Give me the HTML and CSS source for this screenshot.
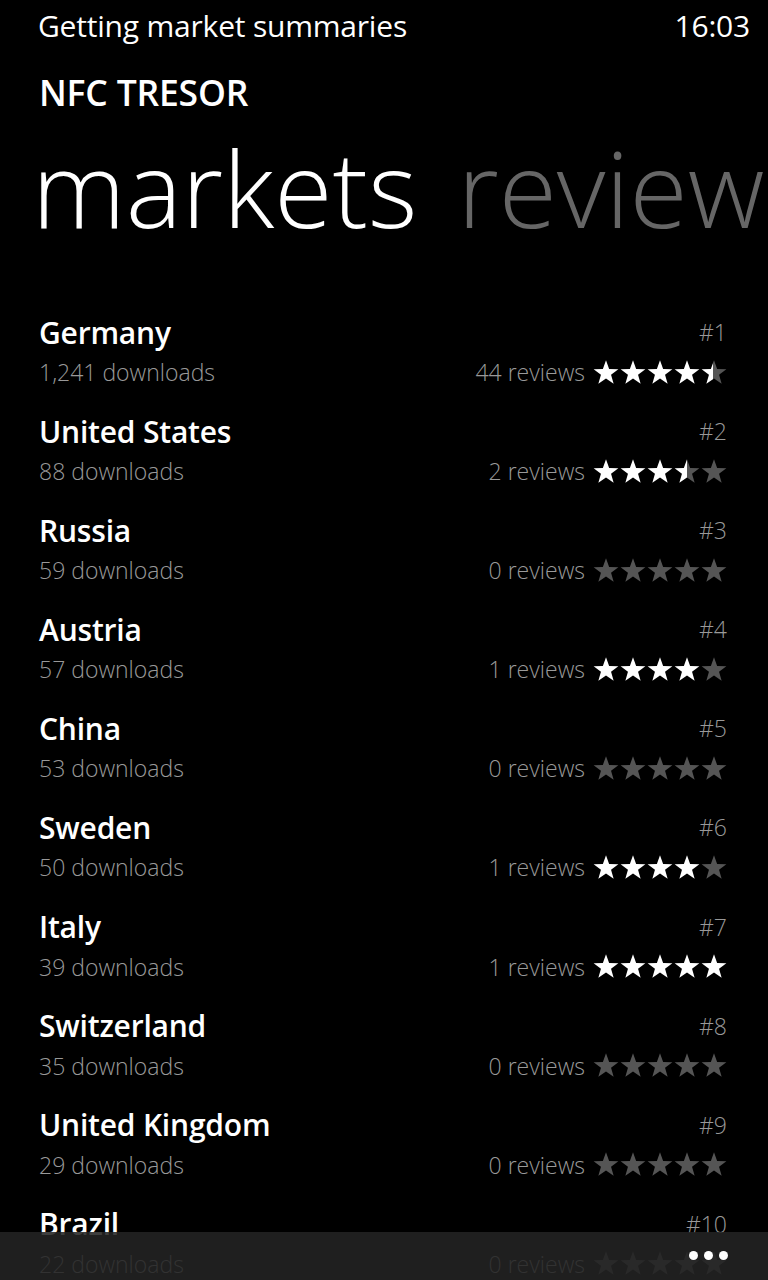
FILE: index.html
```html
<!DOCTYPE html>
<html>
<head>
<meta charset="utf-8">
<link rel="stylesheet" href="styles.css">
</head>
<body>
<svg class="defs" width="0" height="0" aria-hidden="true">
  <defs>
    <path id="star" d="M13 0.2 L16.12 8.91 L25.36 9.18 L18.04 14.84 L20.64 23.72 L13 18.5 L5.36 23.72 L7.96 14.84 L0.64 9.18 L9.88 8.91 Z"/>
    <linearGradient id="f45" x1="0" x2="1" y1="0" y2="0">
      <stop offset="0.45" stop-color="#fff"/><stop offset="0.45" stop-color="#555"/>
    </linearGradient>
    <linearGradient id="f50" x1="0" x2="1" y1="0" y2="0">
      <stop offset="0.5" stop-color="#fff"/><stop offset="0.5" stop-color="#555"/>
    </linearGradient>
  </defs>
</svg>
<div class="phone">
  <div class="status">
    <span class="status-text">Getting market summaries</span>
    <span class="clock">16:03</span>
  </div>
  <div class="app-title">NFC TRESOR</div>
  <div class="pivot">
    <span class="pivot-item active">markets</span>
    <span class="pivot-item">reviews</span>
  </div>
  <ul class="markets">
    <li class="market">
      <div class="line"><span class="name">Germany</span><span class="rank">#1</span></div>
      <div class="line"><span class="dl">1,241 downloads</span><span class="rev">44 reviews
        <span class="stars"><svg viewBox="0 0 26 25"><use href="#star" class="on"/></svg><svg viewBox="0 0 26 25"><use href="#star" class="on"/></svg><svg viewBox="0 0 26 25"><use href="#star" class="on"/></svg><svg viewBox="0 0 26 25"><use href="#star" class="on"/></svg><svg viewBox="0 0 26 25"><use href="#star" fill="url(#f45)"/></svg></span></span></div>
    </li>
    <li class="market">
      <div class="line"><span class="name">United States</span><span class="rank">#2</span></div>
      <div class="line"><span class="dl">88 downloads</span><span class="rev">2 reviews
        <span class="stars"><svg viewBox="0 0 26 25"><use href="#star" class="on"/></svg><svg viewBox="0 0 26 25"><use href="#star" class="on"/></svg><svg viewBox="0 0 26 25"><use href="#star" class="on"/></svg><svg viewBox="0 0 26 25"><use href="#star" fill="url(#f50)"/></svg><svg viewBox="0 0 26 25"><use href="#star" class="off"/></svg></span></span></div>
    </li>
    <li class="market">
      <div class="line"><span class="name">Russia</span><span class="rank">#3</span></div>
      <div class="line"><span class="dl">59 downloads</span><span class="rev">0 reviews
        <span class="stars"><svg viewBox="0 0 26 25"><use href="#star" class="off"/></svg><svg viewBox="0 0 26 25"><use href="#star" class="off"/></svg><svg viewBox="0 0 26 25"><use href="#star" class="off"/></svg><svg viewBox="0 0 26 25"><use href="#star" class="off"/></svg><svg viewBox="0 0 26 25"><use href="#star" class="off"/></svg></span></span></div>
    </li>
    <li class="market">
      <div class="line"><span class="name">Austria</span><span class="rank">#4</span></div>
      <div class="line"><span class="dl">57 downloads</span><span class="rev">1 reviews
        <span class="stars"><svg viewBox="0 0 26 25"><use href="#star" class="on"/></svg><svg viewBox="0 0 26 25"><use href="#star" class="on"/></svg><svg viewBox="0 0 26 25"><use href="#star" class="on"/></svg><svg viewBox="0 0 26 25"><use href="#star" class="on"/></svg><svg viewBox="0 0 26 25"><use href="#star" class="off"/></svg></span></span></div>
    </li>
    <li class="market">
      <div class="line"><span class="name">China</span><span class="rank">#5</span></div>
      <div class="line"><span class="dl">53 downloads</span><span class="rev">0 reviews
        <span class="stars"><svg viewBox="0 0 26 25"><use href="#star" class="off"/></svg><svg viewBox="0 0 26 25"><use href="#star" class="off"/></svg><svg viewBox="0 0 26 25"><use href="#star" class="off"/></svg><svg viewBox="0 0 26 25"><use href="#star" class="off"/></svg><svg viewBox="0 0 26 25"><use href="#star" class="off"/></svg></span></span></div>
    </li>
    <li class="market">
      <div class="line"><span class="name">Sweden</span><span class="rank">#6</span></div>
      <div class="line"><span class="dl">50 downloads</span><span class="rev">1 reviews
        <span class="stars"><svg viewBox="0 0 26 25"><use href="#star" class="on"/></svg><svg viewBox="0 0 26 25"><use href="#star" class="on"/></svg><svg viewBox="0 0 26 25"><use href="#star" class="on"/></svg><svg viewBox="0 0 26 25"><use href="#star" class="on"/></svg><svg viewBox="0 0 26 25"><use href="#star" class="off"/></svg></span></span></div>
    </li>
    <li class="market">
      <div class="line"><span class="name">Italy</span><span class="rank">#7</span></div>
      <div class="line"><span class="dl">39 downloads</span><span class="rev">1 reviews
        <span class="stars"><svg viewBox="0 0 26 25"><use href="#star" class="on"/></svg><svg viewBox="0 0 26 25"><use href="#star" class="on"/></svg><svg viewBox="0 0 26 25"><use href="#star" class="on"/></svg><svg viewBox="0 0 26 25"><use href="#star" class="on"/></svg><svg viewBox="0 0 26 25"><use href="#star" class="on"/></svg></span></span></div>
    </li>
    <li class="market">
      <div class="line"><span class="name">Switzerland</span><span class="rank">#8</span></div>
      <div class="line"><span class="dl">35 downloads</span><span class="rev">0 reviews
        <span class="stars"><svg viewBox="0 0 26 25"><use href="#star" class="off"/></svg><svg viewBox="0 0 26 25"><use href="#star" class="off"/></svg><svg viewBox="0 0 26 25"><use href="#star" class="off"/></svg><svg viewBox="0 0 26 25"><use href="#star" class="off"/></svg><svg viewBox="0 0 26 25"><use href="#star" class="off"/></svg></span></span></div>
    </li>
    <li class="market">
      <div class="line"><span class="name">United Kingdom</span><span class="rank">#9</span></div>
      <div class="line"><span class="dl">29 downloads</span><span class="rev">0 reviews
        <span class="stars"><svg viewBox="0 0 26 25"><use href="#star" class="off"/></svg><svg viewBox="0 0 26 25"><use href="#star" class="off"/></svg><svg viewBox="0 0 26 25"><use href="#star" class="off"/></svg><svg viewBox="0 0 26 25"><use href="#star" class="off"/></svg><svg viewBox="0 0 26 25"><use href="#star" class="off"/></svg></span></span></div>
    </li>
    <li class="market">
      <div class="line"><span class="name">Brazil</span><span class="rank">#10</span></div>
      <div class="line"><span class="dl">22 downloads</span><span class="rev">0 reviews
        <span class="stars"><svg viewBox="0 0 26 25"><use href="#star" class="off"/></svg><svg viewBox="0 0 26 25"><use href="#star" class="off"/></svg><svg viewBox="0 0 26 25"><use href="#star" class="off"/></svg><svg viewBox="0 0 26 25"><use href="#star" class="off"/></svg><svg viewBox="0 0 26 25"><use href="#star" class="off"/></svg></span></span></div>
    </li>
  </ul>
  <div class="appbar">
    <span class="dots"><i></i><i></i><i></i></span>
  </div>
</div>
</body>
</html>
```

FILE: styles.css
```css
html, body {
  margin: 0;
  padding: 0;
  background: #000;
  height: 1280px;
  overflow: hidden;
}
body {
  font-family: "Open Sans", "Noto Sans", sans-serif;
  color: #fff;
}
.defs { position: absolute; }
.phone {
  width: 768px;
  height: 1280px;
  overflow: hidden;
  position: relative;
}
.status {
  display: flex;
  justify-content: space-between;
  align-items: center;
  height: 50px;
  padding: 0 18px 0 38px;
  font-size: 30px;
  font-weight: 400;
  letter-spacing: -0.2px;
}
.app-title {
  padding-left: 39px;
  margin-top: 21px;
  height: 42px;
  line-height: 42px;
  font-size: 35.5px;
  font-weight: 600;
  letter-spacing: -0.2px;
}
.pivot {
  display: flex;
  gap: 40px;
  white-space: nowrap;
  padding-left: 32px;
  height: 150px;
  line-height: 150px;
  font-size: 106px;
  font-weight: 300;
  letter-spacing: 0;
  margin-top: -1px;
}
.pivot-item { color: #666; }
.pivot-item.active { color: #fff; }
.markets {
  list-style: none;
  margin: 0;
  padding: 0 41px 0 39px;
  margin-top: 51px;
}
.market {
  height: 99.1px;
}
.line {
  display: flex;
  justify-content: space-between;
  align-items: center;
}
.line:first-child { height: 38px; }
.line:last-child { height: 42px; }
.name {
  font-size: 30px;
  font-weight: 600;
  letter-spacing: -0.2px;
}
.rank {
  font-size: 23px;
  font-weight: 300;
  color: #999;
}
.dl, .rev {
  font-size: 23px;
  font-weight: 300;
  color: #999;
}
.rev {
  display: flex;
  align-items: center;
  gap: 8px;
}
.stars {
  display: flex;
  gap: 1px;
}
.stars svg {
  width: 26px;
  height: 25px;
  display: block;
}
.on { fill: #fff; }
.off { fill: #555; }
.appbar {
  position: absolute;
  left: 0;
  right: 0;
  bottom: 0;
  height: 48px;
  background: rgba(35, 35, 35, 0.88);
  display: flex;
  justify-content: flex-end;
  align-items: flex-start;
  padding-right: 40px;
}
.dots {
  display: flex;
  gap: 6px;
  margin-top: 19px;
}
.dots i {
  width: 9px;
  height: 9px;
  border-radius: 50%;
  background: #fff;
}
```
